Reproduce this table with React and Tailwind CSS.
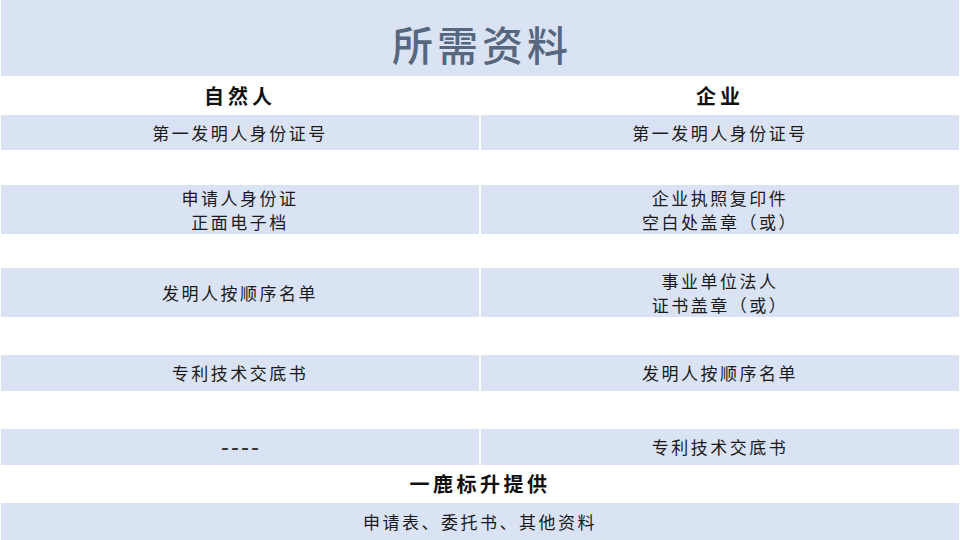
import React from "react";

const font = { fontFamily: '"Noto Sans CJK SC", "Noto Sans", sans-serif' };

function Cell({ children, blue }) {
  return (
    <div
      className={`flex-1 flex flex-col items-center justify-center text-center text-[17px] leading-[24px] tracking-[2.5px] text-[#1a1a1a] ${
        blue ? "bg-[#dae3f3]" : "bg-white"
      }`}
    >
      {children}
    </div>
  );
}

function Row({ h, blue, left, right }) {
  return (
    <div className={`flex gap-[2px] px-[1px] ${h}`}>
      <Cell blue={blue}>{left}</Cell>
      <Cell blue={blue}>{right}</Cell>
    </div>
  );
}

export default function App() {
  return (
    <div className="w-[960px] h-[540px] bg-white overflow-hidden flex flex-col" style={font}>
      <div className="h-[76px] mx-[1px] bg-[#dae3f3] flex items-center justify-center pt-[10px]">
        <span className="text-[41px] leading-none tracking-[4px] text-[#56677f] font-medium pl-[4px]">
          所需资料
        </span>
      </div>
      <div className="h-[39px] flex px-[1px] gap-[2px]">
        <div className="flex-1 flex items-center justify-center text-[20px] font-bold tracking-[4px] text-[#111]">
          自然人
        </div>
        <div className="flex-1 flex items-center justify-center text-[20px] font-bold tracking-[4px] text-[#111]">
          企业
        </div>
      </div>
      <Row h="h-[35px]" blue left="第一发明人身份证号" right="第一发明人身份证号" />
      <Row h="h-[35px]" />
      <Row
        h="h-[49px]"
        blue
        left={
          <>
            <span>申请人身份证</span>
            <span>正面电子档</span>
          </>
        }
        right={
          <>
            <span>企业执照复印件</span>
            <span>空白处盖章（或）</span>
          </>
        }
      />
      <Row h="h-[34px]" />
      <Row
        h="h-[49px]"
        blue
        left="发明人按顺序名单"
        right={
          <>
            <span>事业单位法人</span>
            <span>证书盖章（或）</span>
          </>
        }
      />
      <Row h="h-[38px]" />
      <Row h="h-[36px]" blue left="专利技术交底书" right="发明人按顺序名单" />
      <Row h="h-[38px]" />
      <Row
        h="h-[36px]"
        blue
        left={<span className="text-[24px] leading-none tracking-[2px] pl-[2px] text-[#333]" style={{ fontFamily: '"Liberation Sans", sans-serif' }}>----</span>}
        right="专利技术交底书"
      />
      <div className="h-[38px] flex items-center justify-center text-[20px] font-bold tracking-[3.5px] text-[#111]">
        一鹿标升提供
      </div>
      <div className="h-[37px] mx-[1px] bg-[#dae3f3] flex items-center justify-center text-[17px] tracking-[2.5px] text-[#1a1a1a]">
        申请表、委托书、其他资料
      </div>
    </div>
  );
}
